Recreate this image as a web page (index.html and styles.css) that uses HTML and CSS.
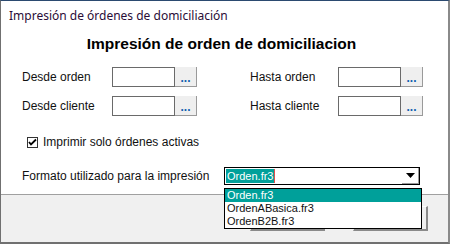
FILE: index.html
```html
<!DOCTYPE html>
<html lang="es">
<head>
  <meta charset="UTF-8" />
  <title>Impresión de órdenes de domiciliación</title>
  <link rel="stylesheet" href="styles.css">
</head>
<body>
  <div class="ventana">
    <div class="titulo">Impresión de órdenes de domiciliación</div>

    <div class="contenido">
      <h1>Impresión de orden de domiciliacion</h1>

      <div class="campos">
        <label>Desde orden</label>
        <div class="picker"><input type="text" /><button>...</button></div>
        <label>Hasta orden</label>
        <div class="picker"><input type="text" /><button>...</button></div>

        <label>Desde cliente</label>
        <div class="picker"><input type="text" /><button>...</button></div>
        <label>Hasta cliente</label>
        <div class="picker"><input type="text" /><button>...</button></div>
      </div>

      <label class="check">
        <span class="caja">
          <svg width="9" height="9" viewBox="0 0 9 9"><path d="M1 4 L3 6.5 L8 1.5" fill="none" stroke="#000" stroke-width="1.8"/></svg>
        </span>
        Imprimir solo órdenes activas
      </label>

      <div class="formato">
        <label>Formato utilizado para la impresión</label>
        <div class="combo">
          <span class="valor">Orden.fr3</span>
          <span class="flecha">
            <svg width="9" height="5" viewBox="0 0 9 5"><path d="M0 0 H9 L4.5 5 Z" fill="#000"/></svg>
          </span>
          <ul class="lista">
            <li class="activo">Orden.fr3</li>
            <li>OrdenABasica.fr3</li>
            <li>OrdenB2B.fr3</li>
          </ul>
        </div>
      </div>
    </div>

    <!-- botones tapados por la lista desplegada -->
    <div class="pie">
      <button class="boton"></button>
      <button class="boton"></button>
    </div>
  </div>
</body>
</html>
```

FILE: styles.css
```css
* {
  margin: 0;
  padding: 0;
  box-sizing: border-box;
}

body {
  font-family: "Liberation Sans", Arial, sans-serif;
  font-size: 12px;
  color: #111;
  background: #fff;
}

.ventana {
  width: 450px;
  height: 244px;
  border-top: 1px solid #2b4a70;
  border-left: 1px solid #707070;
  border-right: 2px solid #8a8a8a;
  border-bottom: 2px solid #707070;
  display: flex;
  flex-direction: column;
}

.titulo {
  height: 29px;
  line-height: 29px;
  padding-left: 8px;
  font-family: "Noto Sans", sans-serif;
  font-size: 12px;
  color: #2a0d38;
}

.contenido {
  padding: 4px 0 9px 21px;
}

h1 {
  font-family: "Liberation Sans", Arial, sans-serif;
  font-size: 15.5px;
  line-height: 20px;
  text-align: center;
  margin-right: 27px;
  color: #000;
}

.campos {
  display: grid;
  grid-template-columns: 90px 138px 88px auto;
  row-gap: 9px;
  align-items: center;
  margin-top: 13px;
}

.picker {
  display: flex;
  height: 20px;
}

.picker input {
  width: 63px;
  height: 20px;
  border: 1px solid #6a6a6a;
  background: #fff;
}

.picker button {
  width: 22px;
  height: 20px;
  background: #efefef;
  border: none;
  border-right: 1px solid #9a9a9a;
  border-bottom: 1px solid #9a9a9a;
  color: #1060b0;
  font-weight: bold;
  font-size: 12px;
  line-height: 22px;
  font-family: "Liberation Sans", Arial, sans-serif;
}

.check {
  display: flex;
  align-items: center;
  gap: 5px;
  height: 16px;
  margin-top: 18px;
  padding-left: 5px;
}

.caja {
  width: 11px;
  height: 11px;
  border: 1px solid #333;
  display: flex;
  align-items: center;
  justify-content: center;
}

.formato {
  display: flex;
  align-items: center;
  margin-top: 17px;
}

.formato label {
  width: 202px;
}

.combo {
  position: relative;
  width: 196px;
  height: 18px;
  border: 1px solid #000;
  display: flex;
  align-items: center;
  justify-content: space-between;
  padding-left: 1px;
  font-size: 11px;
}

.valor {
  background: #00a09a;
  color: #fff;
  line-height: 14px;
  padding: 0 1px;
  border-right: 1px solid #e05050;
}

.flecha {
  width: 17px;
  height: 16px;
  display: flex;
  align-items: center;
  justify-content: center;
  border-right: 1px solid #9a9a9a;
  border-bottom: 1px solid #9a9a9a;
}

.lista {
  position: absolute;
  top: 20px;
  left: -1px;
  width: 198px;
  list-style: none;
  background: #fff;
  border: 1px solid #000;
  z-index: 2;
}

.lista li {
  height: 13px;
  line-height: 13px;
  padding-left: 2px;
}

.lista li.activo {
  background: #00a09a;
  color: #fff;
}

.pie {
  flex: 1;
  background: #f0f0f0;
  border-top: 1px solid #a0a0a0;
  display: flex;
  justify-content: flex-end;
  gap: 28px;
  padding: 11px 20px 0 0;
}

.boton {
  width: 75px;
  height: 25px;
  background: #f0f0f0;
  border: 1px solid #fff;
  border-right: 2px solid #8a8a8a;
  border-bottom: 2px solid #8a8a8a;
}
```
